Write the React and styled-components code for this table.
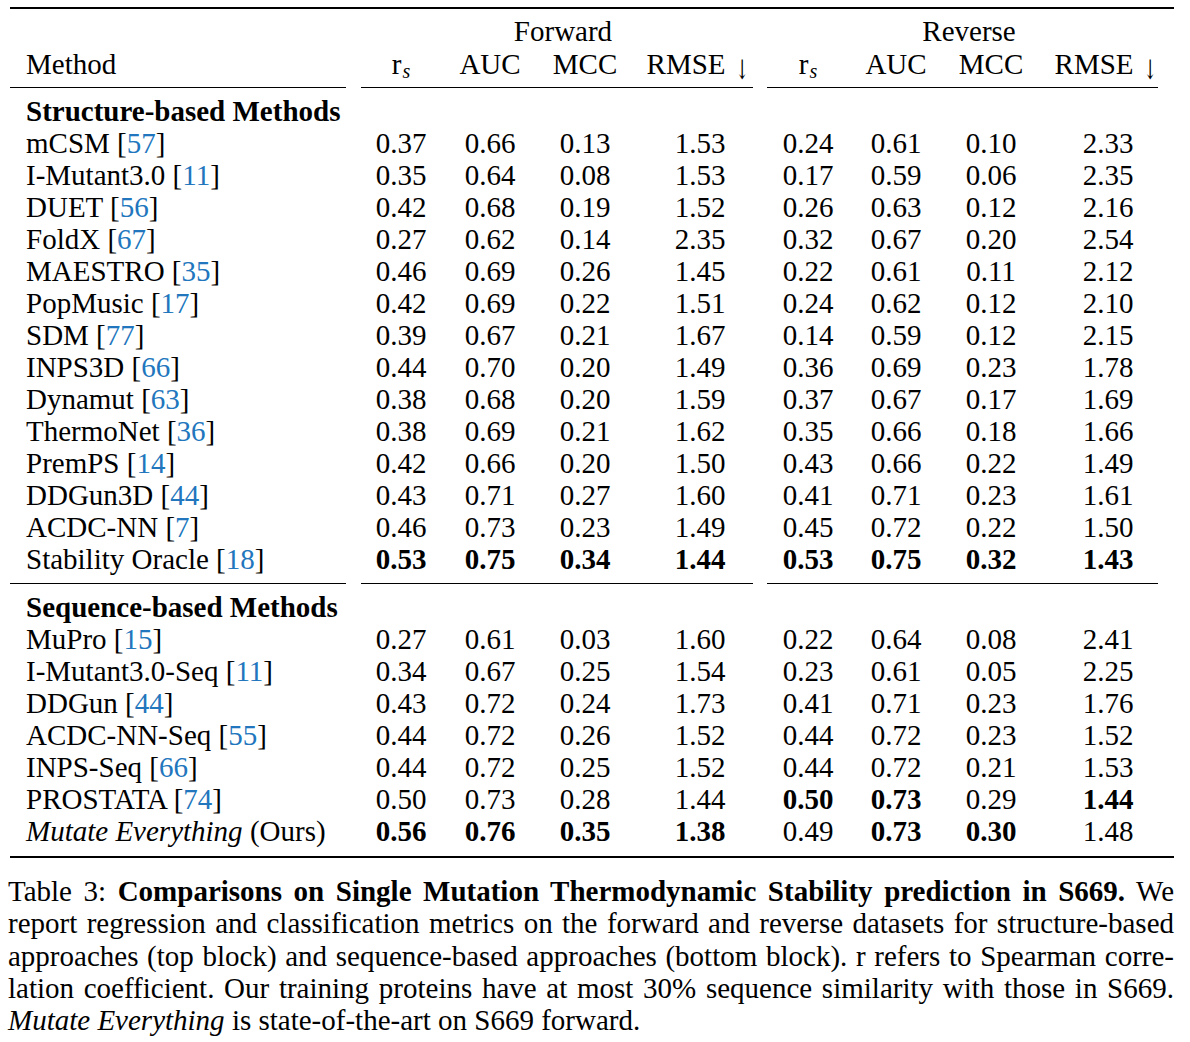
import React from "react";
import styled, { createGlobalStyle } from "styled-components";

const GlobalStyle = createGlobalStyle`
  html, body {
    margin: 0;
    padding: 0;
    background: #fff;
  }
  body {
    font-family: "Liberation Serif", "Times New Roman", serif;
    color: #000;
  }
`;

const COLS = "346px 90px 88px 102px 128px 88px 88px 102px 132px";

const Page = styled.div`
  width: 1190px;
  padding-top: 7px;
`;

const Table = styled.div`
  margin-left: 10px;
  width: 1164px;
`;

const HeavyRule = styled.div`
  height: 2px;
  background: #000;
  margin-top: ${(p) => p.$top || 0}px;
`;

const Row = styled.div`
  display: grid;
  grid-template-columns: ${COLS};
  height: 32px;
  line-height: 32px;
  font-size: 29px;
  white-space: nowrap;
  margin-top: ${(p) => p.$top || 0}px;
`;

const Cell = styled.div`
  text-align: center;
  font-weight: ${(p) => (p.$bold ? 700 : 400)};
`;

const MethodCell = styled.div`
  padding-left: 16px;
  text-align: left;
  font-weight: ${(p) => (p.$bold ? 700 : 400)};
`;

const GroupLabel = styled.div`
  grid-column: ${(p) => p.$span};
  text-align: center;
  padding-left: ${(p) => p.$shift || 0}px;
`;

const Sub = styled.span`
  font-size: 20px;
  font-style: italic;
  position: relative;
  top: 4px;
  margin-left: 1px;
`;

const Arrow = styled.span`
  display: inline-block;
  font-family: "DejaVu Serif", "DejaVu Sans", serif;
  font-size: 27px;
  line-height: 1;
  color: #000;
  position: relative;
  top: 5px;
  margin-left: -2px;
  transform: scaleX(0.6);
`;

const Cite = styled.span`
  color: #2176bd;
`;

const RuleRow = styled.div`
  display: grid;
  grid-template-columns: 346px 408px 410px;
  margin-top: ${(p) => p.$top || 0}px;
`;

const ThinRule = styled.div`
  height: 1px;
  background: #000;
  margin-left: ${(p) => p.$l || 0}px;
  margin-right: ${(p) => p.$r || 0}px;
`;

const Caption = styled.div`
  margin-left: 8px;
  width: 1166px;
  margin-top: 17px;
  font-size: 29px;
  line-height: 32.25px;
`;

const CaptionLine = styled.div`
  text-align: justify;
  text-align-last: ${(p) => (p.$last ? "left" : "justify")};
`;

const structure = [
  { name: "mCSM", cite: "57", v: ["0.37", "0.66", "0.13", "1.53", "0.24", "0.61", "0.10", "2.33"] },
  { name: "I-Mutant3.0", cite: "11", v: ["0.35", "0.64", "0.08", "1.53", "0.17", "0.59", "0.06", "2.35"] },
  { name: "DUET", cite: "56", v: ["0.42", "0.68", "0.19", "1.52", "0.26", "0.63", "0.12", "2.16"] },
  { name: "FoldX", cite: "67", v: ["0.27", "0.62", "0.14", "2.35", "0.32", "0.67", "0.20", "2.54"] },
  { name: "MAESTRO", cite: "35", v: ["0.46", "0.69", "0.26", "1.45", "0.22", "0.61", "0.11", "2.12"] },
  { name: "PopMusic", cite: "17", v: ["0.42", "0.69", "0.22", "1.51", "0.24", "0.62", "0.12", "2.10"] },
  { name: "SDM", cite: "77", v: ["0.39", "0.67", "0.21", "1.67", "0.14", "0.59", "0.12", "2.15"] },
  { name: "INPS3D", cite: "66", v: ["0.44", "0.70", "0.20", "1.49", "0.36", "0.69", "0.23", "1.78"] },
  { name: "Dynamut", cite: "63", v: ["0.38", "0.68", "0.20", "1.59", "0.37", "0.67", "0.17", "1.69"] },
  { name: "ThermoNet", cite: "36", v: ["0.38", "0.69", "0.21", "1.62", "0.35", "0.66", "0.18", "1.66"] },
  { name: "PremPS", cite: "14", v: ["0.42", "0.66", "0.20", "1.50", "0.43", "0.66", "0.22", "1.49"] },
  { name: "DDGun3D", cite: "44", v: ["0.43", "0.71", "0.27", "1.60", "0.41", "0.71", "0.23", "1.61"] },
  { name: "ACDC-NN", cite: "7", v: ["0.46", "0.73", "0.23", "1.49", "0.45", "0.72", "0.22", "1.50"] },
  {
    name: "Stability Oracle",
    cite: "18",
    v: ["0.53", "0.75", "0.34", "1.44", "0.53", "0.75", "0.32", "1.43"],
    bold: [0, 1, 2, 3, 4, 5, 6, 7],
  },
];

const sequence = [
  { name: "MuPro", cite: "15", v: ["0.27", "0.61", "0.03", "1.60", "0.22", "0.64", "0.08", "2.41"] },
  { name: "I-Mutant3.0-Seq", cite: "11", v: ["0.34", "0.67", "0.25", "1.54", "0.23", "0.61", "0.05", "2.25"] },
  { name: "DDGun", cite: "44", v: ["0.43", "0.72", "0.24", "1.73", "0.41", "0.71", "0.23", "1.76"] },
  { name: "ACDC-NN-Seq", cite: "55", v: ["0.44", "0.72", "0.26", "1.52", "0.44", "0.72", "0.23", "1.52"] },
  { name: "INPS-Seq", cite: "66", v: ["0.44", "0.72", "0.25", "1.52", "0.44", "0.72", "0.21", "1.53"] },
  {
    name: "PROSTATA",
    cite: "74",
    v: ["0.50", "0.73", "0.28", "1.44", "0.50", "0.73", "0.29", "1.44"],
    bold: [4, 5, 7],
  },
  {
    name: "Mutate Everything",
    ours: true,
    v: ["0.56", "0.76", "0.35", "1.38", "0.49", "0.73", "0.30", "1.48"],
    bold: [0, 1, 2, 3, 5, 6],
  },
];

const MethodName = ({ row }) =>
  row.ours ? (
    <>
      <i>{row.name}</i> (Ours)
    </>
  ) : (
    <>
      {row.name} [<Cite>{row.cite}</Cite>]
    </>
  );

const DataRow = ({ row }) => (
  <Row>
    <MethodCell>
      <MethodName row={row} />
    </MethodCell>
    {row.v.map((val, i) => (
      <Cell key={i} $bold={row.bold && row.bold.includes(i)}>
        {val}
      </Cell>
    ))}
  </Row>
);

const MetricHeads = () => (
  <>
    <Cell>
      r<Sub>s</Sub>
    </Cell>
    <Cell>AUC</Cell>
    <Cell>MCC</Cell>
    <Cell>
      RMSE <Arrow>{"\u2193\uFE0E"}</Arrow>
    </Cell>
  </>
);

const MidRules = ({ top }) => (
  <RuleRow $top={top}>
    <ThinRule $r={10} />
    <ThinRule $l={5} $r={11} />
    <ThinRule $l={3} $r={16} />
  </RuleRow>
);

export default function App() {
  return (
    <Page>
      <GlobalStyle />
      <Table>
        <HeavyRule />
        <Row $top={6}>
          <GroupLabel $span="2 / 6" $shift={6}>
            Forward
          </GroupLabel>
          <GroupLabel $span="6 / 10">Reverse</GroupLabel>
        </Row>
        <Row $top={1}>
          <MethodCell>Method</MethodCell>
          <MetricHeads />
          <MetricHeads />
        </Row>
        <MidRules top={7} />
        <Row $top={7}>
          <MethodCell $bold>Structure-based Methods</MethodCell>
        </Row>
        {structure.map((row) => (
          <DataRow key={row.name} row={row} />
        ))}
        <MidRules top={8} />
        <Row $top={7}>
          <MethodCell $bold>Sequence-based Methods</MethodCell>
        </Row>
        {sequence.map((row) => (
          <DataRow key={row.name} row={row} />
        ))}
        <HeavyRule $top={9} />
      </Table>
      <Caption>
        <CaptionLine>
          Table 3:{" "}
          <b>Comparisons on Single Mutation Thermodynamic Stability prediction in S669.</b> We
        </CaptionLine>
        <CaptionLine>
          report regression and classification metrics on the forward and reverse datasets for
          structure-based
        </CaptionLine>
        <CaptionLine>
          approaches (top block) and sequence-based approaches (bottom block). r refers to Spearman
          corre-
        </CaptionLine>
        <CaptionLine>
          lation coefficient. Our training proteins have at most 30% sequence similarity with those
          in S669.
        </CaptionLine>
        <CaptionLine $last>
          <i>Mutate Everything</i> is state-of-the-art on S669 forward.
        </CaptionLine>
      </Caption>
    </Page>
  );
}
